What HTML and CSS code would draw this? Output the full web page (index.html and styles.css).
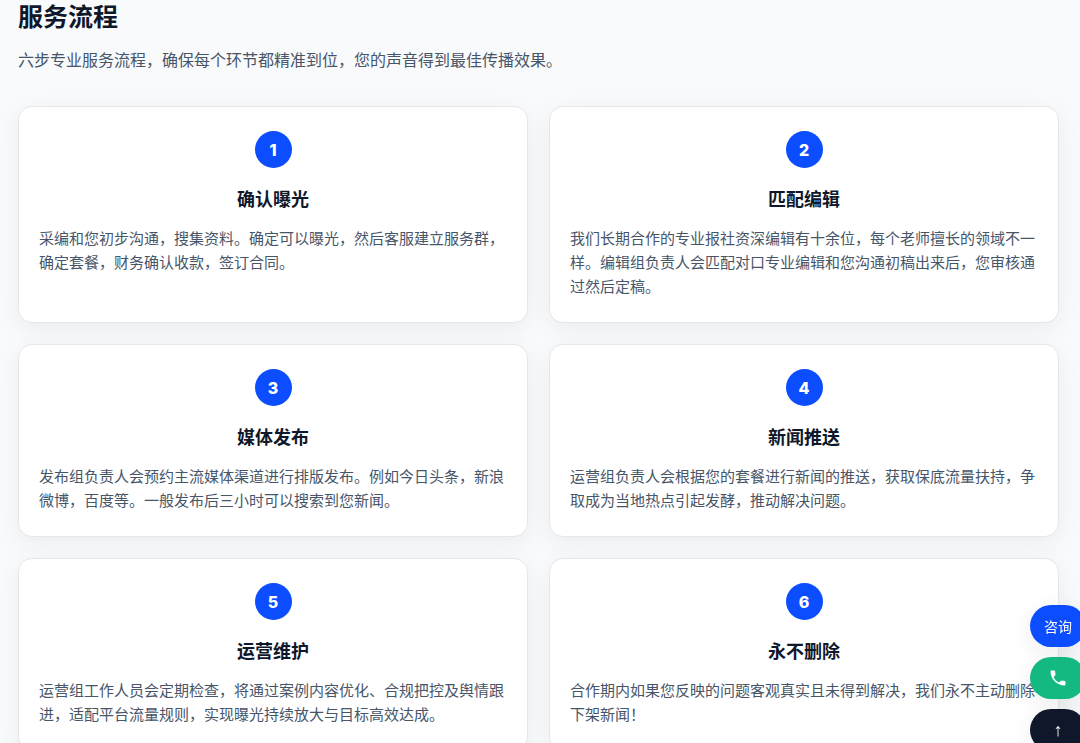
FILE: index.html
```html
<!DOCTYPE html>
<html lang="zh-CN">
<head>
<meta charset="utf-8">
<meta name="viewport" content="width=device-width, initial-scale=1">
<title>服务流程</title>
<link rel="stylesheet" href="styles.css">
</head>
<body>
<main class="section">
  <h2 class="section-title">服务流程</h2>
  <p class="section-lead">六步专业服务流程，确保每个环节都精准到位，您的声音得到最佳传播效果。</p>
  <div class="steps">
    <article class="step">
      <span class="step-number">1</span>
      <h3 class="step-title">确认曝光</h3>
      <p class="step-text">采编和您初步沟通，搜集资料。确定可以曝光，然后客服建立服务群，确定套餐，财务确认收款，签订合同。</p>
    </article>
    <article class="step">
      <span class="step-number">2</span>
      <h3 class="step-title">匹配编辑</h3>
      <p class="step-text">我们长期合作的专业报社资深编辑有十余位，每个老师擅长的领域不一样。编辑组负责人会匹配对口专业编辑和您沟通初稿出来后，您审核通过然后定稿。</p>
    </article>
    <article class="step">
      <span class="step-number">3</span>
      <h3 class="step-title">媒体发布</h3>
      <p class="step-text">发布组负责人会预约主流媒体渠道进行排版发布。例如今日头条，新浪微博，百度等。一般发布后三小时可以搜索到您新闻。</p>
    </article>
    <article class="step">
      <span class="step-number">4</span>
      <h3 class="step-title">新闻推送</h3>
      <p class="step-text">运营组负责人会根据您的套餐进行新闻的推送，获取保底流量扶持，争取成为当地热点引起发酵，推动解决问题。</p>
    </article>
    <article class="step">
      <span class="step-number">5</span>
      <h3 class="step-title">运营维护</h3>
      <p class="step-text">运营组工作人员会定期检查，将通过案例内容优化、合规把控及舆情跟进，适配平台流量规则，实现曝光持续放大与目标高效达成。</p>
    </article>
    <article class="step">
      <span class="step-number">6</span>
      <h3 class="step-title">永不删除</h3>
      <p class="step-text">合作期内如果您反映的问题客观真实且未得到解决，我们永不主动删除下架新闻！</p>
    </article>
  </div>
</main>
<nav class="float-bar" aria-label="快捷操作">
  <a class="float-btn float-btn-chat" href="#chat">咨询</a>
  <a class="float-btn float-btn-phone" href="#phone" aria-label="电话">
    <svg class="float-icon" viewBox="0 0 24 24" aria-hidden="true"><path fill="currentColor" d="M6.62 10.79c1.44 2.83 3.76 5.14 6.59 6.59l2.2-2.2c.27-.27.67-.36 1.02-.24 1.12.37 2.33.57 3.57.57.55 0 1 .45 1 1V20c0 .55-.45 1-1 1-9.39 0-17-7.61-17-17 0-.55.45-1 1-1h3.5c.55 0 1 .45 1 1 0 1.25.2 2.45.57 3.57.11.35.03.74-.25 1.02l-2.2 2.2z"/></svg>
  </a>
  <button class="float-btn float-btn-top" type="button" aria-label="返回顶部">↑</button>
</nav>
</body>
</html>
```

FILE: styles.css
```css
* {
  box-sizing: border-box;
}

html {
  scrollbar-width: none;
}

body {
  margin: 0;
  background: #f8fafc;
  color: #0f172a;
  font-family: Inter, "Noto Sans CJK SC", sans-serif;
}

.section {
  padding: 0 21px 24px 18px;
}

.section-title {
  margin: 0;
  font-size: 25px;
  line-height: 34px;
  font-weight: 700;
}

.section-lead {
  margin: 12px 0 32px;
  color: #475569;
  font-size: 16px;
  line-height: 28px;
}

.steps {
  display: grid;
  grid-template-columns: repeat(2, minmax(0, 1fr));
  gap: 21px;
}

.step {
  display: flex;
  flex-direction: column;
  align-items: center;
  padding: 24px 20px 23px;
  border: 1px solid #e5e7eb;
  border-radius: 14px;
  background: #fff;
  box-shadow: 0 6px 24px rgba(15, 23, 42, 0.06);
}

.step-number {
  display: flex;
  align-items: center;
  justify-content: center;
  width: 37px;
  height: 37px;
  border-radius: 50%;
  background: #0b4dff;
  color: #fff;
  font-size: 16px;
  font-weight: 800;
}

.step-title {
  margin: 18px 0 13px;
  font-size: 18px;
  line-height: 28px;
  font-weight: 700;
}

.step-text {
  align-self: stretch;
  margin: 0;
  color: #475569;
  font-size: 15px;
  line-height: 24px;
}

.float-bar {
  position: fixed;
  right: -6px;
  bottom: -8px;
  display: flex;
  flex-direction: column;
  gap: 10px;
}

.float-btn {
  display: flex;
  align-items: center;
  justify-content: center;
  min-width: 56px;
  height: 42px;
  padding: 0 14px;
  border: 0;
  border-radius: 21px;
  color: #fff;
  font-family: inherit;
  font-size: 14px;
  text-decoration: none;
  box-shadow: 0 6px 24px rgba(15, 23, 42, 0.08);
}

.float-btn-chat {
  background: #0b4dff;
}

.float-btn-phone {
  background: #14b881;
}

.float-btn-top {
  background: #0f172a;
  font-family: "Liberation Sans", sans-serif;
  font-size: 18px;
}

.float-icon {
  width: 20px;
  height: 20px;
}
```
